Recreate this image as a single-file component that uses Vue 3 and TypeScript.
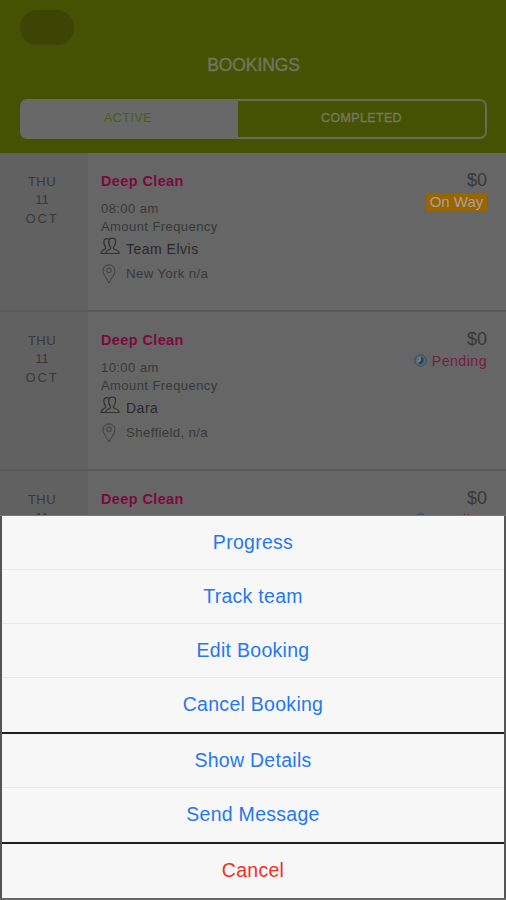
<script setup lang="ts">
interface Booking {
  time: string
  team: string
  place: string
  status: 'On Way' | 'Pending'
}

const bookings: Booking[] = [
  { time: '08:00 am', team: 'Team Elvis', place: 'New York n/a', status: 'On Way' },
  { time: '10:00 am', team: 'Dara', place: 'Sheffield, n/a', status: 'Pending' },
  { time: '12:00 pm', team: 'Dara', place: 'Sheffield, n/a', status: 'Pending' },
]

const groups: string[][] = [
  ['Progress', 'Track team', 'Edit Booking', 'Cancel Booking'],
  ['Show Details', 'Send Message'],
  ['Cancel'],
]
</script>

<template>
  <div class="screen">
    <header class="header">
      <div class="pill"></div>
      <h1 class="title">BOOKINGS</h1>
      <div class="tabs">
        <div class="tab active"><span class="active-label">ACTIVE</span></div>
        <div class="tab"><span class="completed-label">COMPLETED</span></div>
      </div>
    </header>

    <main class="list">
      <article v-for="(b, i) in bookings" :key="i" class="row">
        <div class="date">
          <span class="day">THU</span>
          <span class="num">11</span>
          <span class="month">OCT</span>
        </div>
        <div class="info">
          <h2 class="service">Deep Clean</h2>
          <span class="line">{{ b.time }}</span>
          <span class="line">Amount Frequency</span>
          <div class="meta team">
            <svg class="people" viewBox="0 0 20 18">
              <path d="M5.6 16.5H19C19 14 17.8 13.4 14.4 12.2C13.2 11.6 13.3 10.6 13.8 9.8C15.3 8 15.8 6 15.6 3.8C15.3 .5 9.6 .2 8.9 3.6C8.5 6 8.9 8.5 10.3 10C10.9 11 10.7 11.9 9.8 12.4C7.6 13.2 5.8 13.8 5.6 16.5Z" />
              <path d="M8.8 2.2C6.7 .8 3.8 2 3.8 4.6C3.8 7 4.3 8.7 5.6 10C6 11 5.8 11.6 5 12C2.5 13.2 1.2 13.6 1 16.5H5.6" />
            </svg>
            <span>{{ b.team }}</span>
          </div>
          <div class="meta place">
            <svg class="pin" viewBox="0 0 14 20">
              <path d="M7 19C5.8 15.7 1 11 1 6.6A6 5.8 0 0 1 13 6.6C13 11 8.2 15.7 7 19Z" />
              <circle cx="7" cy="6.4" r="2.4" />
            </svg>
            <span>{{ b.place }}</span>
          </div>
        </div>
        <div class="side">
          <span class="price">$0</span>
          <span v-if="b.status === 'On Way'" class="onway">On Way</span>
          <span v-else class="pending">
            <svg class="clock" viewBox="0 0 13 13">
              <circle class="ring" cx="6.5" cy="6.5" r="5.7" />
              <path class="fill" d="M7 2.4A4.1 4.1 0 0 1 5 10.3L4.5 8L7 6.5Z" />
              <path class="light" d="M6 3V6.2L3.7 8.3" />
            </svg>
            <span class="pending-label">Pending</span>
          </span>
        </div>
      </article>
    </main>

    <div class="sheet">
      <div v-for="(g, i) in groups" :key="i" class="group">
        <div v-for="label in g" :key="label" class="action" :class="{ danger: label === 'Cancel' }">
          <span class="action-label">{{ label }}</span>
        </div>
      </div>
    </div>
  </div>
</template>

<style>
body {
  margin: 0;
  background: #666;
}
</style>

<style scoped>
.screen {
  position: relative;
  width: 506px;
  height: 900px;
  overflow: hidden;
  box-sizing: border-box;
  background: #666;
  font-family: "Liberation Sans", Arial, sans-serif;
  color: #383838;
}
.header {
  height: 153px;
  box-sizing: border-box;
  padding: 10px 19px 0 20px;
  background: #465203;
}
.pill {
  width: 54px;
  height: 35px;
  border-radius: 17px;
  background: #3c4504;
}
.title {
  margin: 10px 0 0;
  height: 20px;
  line-height: 20px;
  font-size: 17.5px;
  font-weight: 400;
  letter-spacing: -0.08px;
  -webkit-text-stroke: 0.35px #737560;
  text-align: center;
  color: #737560;
}
.tabs {
  display: flex;
  margin-top: 24px;
  height: 40px;
  box-sizing: border-box;
  border: 2px solid #686b56;
  border-left-color: #686868;
  border-radius: 7px;
  background: linear-gradient(90deg, #686868 216px, transparent 216px);
}
.tab {
  flex: 1 1 0;
  line-height: 35px;
  font-size: 12.5px;
  text-align: center;
  color: #74775f;
}
.completed-label {
  letter-spacing: 0.35px;
  -webkit-text-stroke: 0.35px #74775f;
}
.tab.active {
  flex: 0 0 216px;
  box-sizing: border-box;
  padding-right: 4px;
  letter-spacing: 0.5px;
  color: #4e5b16;
}
.row {
  display: flex;
  height: 159px;
  box-sizing: border-box;
  border-bottom: 2px solid #595959;
}
.date {
  flex: 0 0 88px;
  box-sizing: border-box;
  padding: 20px 4px 0 0;
  display: flex;
  flex-direction: column;
  align-items: center;
  background: #616161;
  font-size: 13px;
  line-height: 18.3px;
}
.day {
  letter-spacing: 0.5px;
}
.month {
  letter-spacing: 1.9px;
  margin-right: 0;
}
.info {
  flex: 1;
  padding: 19px 0 0 13px;
  font-size: 13px;
}
.service {
  margin: 0 0 10px;
  font-size: 14.5px;
  line-height: 18px;
  font-weight: 700;
  letter-spacing: 0.38px;
  color: #7c0a38;
}
.line {
  display: block;
  line-height: 18.4px;
  letter-spacing: 0.43px;
}
.meta {
  display: flex;
  align-items: center;
}
.team {
  height: 19px;
  margin-top: 3px;
  font-size: 14px;
  letter-spacing: 0.5px;
  color: #292929;
}
.place {
  height: 22px;
  margin-top: 4px;
  font-size: 13.3px;
  letter-spacing: 0.33px;
}
.people {
  width: 20px;
  height: 18px;
  margin: -7px 6px 0 -1px;
  fill: none;
  stroke: #303030;
  stroke-width: 1.2;
}
.pin {
  width: 14px;
  height: 20px;
  margin: 0 10px 0 1px;
  fill: none;
  stroke: #3e3e3e;
  stroke-width: 1;
}
.side {
  flex: 0 0 100px;
  box-sizing: border-box;
  padding: 17px 19px 0 0;
  display: flex;
  flex-direction: column;
  align-items: flex-end;
}
.price {
  font-size: 18px;
  line-height: 20px;
}
.onway {
  margin-top: 3px;
  width: 61px;
  height: 18px;
  line-height: 18px;
  font-size: 15px;
  text-align: center;
  background: #996500;
  color: #a8a29a;
}
.pending {
  display: flex;
  align-items: center;
  gap: 5px;
  margin-top: 3px;
  height: 18px;
  font-size: 14.3px;
  letter-spacing: 0.4px;
  color: #741d3f;
}
.clock {
  width: 13px;
  height: 13px;
  margin-top: -2px;
  fill: none;
}
.ring {
  stroke: #274d6e;
  stroke-width: 1;
}
.fill {
  fill: #104a78;
}
.light {
  stroke: #819097;
  stroke-width: 1.2;
}
.sheet {
  position: absolute;
  left: 0;
  right: 0;
  bottom: 0;
  padding: 0 2px;
  display: flex;
  flex-direction: column;
  gap: 2px;
  background: linear-gradient(90deg, #555 2px, #202020 2px, #202020 504px, #555 504px);
  border-top: 1px solid #777;
  border-bottom: 2px solid #666;
}
.group {
  background: #f7f7f7;
}
.action {
  height: 54px;
  box-sizing: border-box;
  border-bottom: 1px solid #e9e9e9;
  line-height: 53px;
  font-size: 19.5px;
  letter-spacing: 0.28px;
  text-align: center;
  color: #2878ed;
}
.action:last-child {
  border-bottom: 0;
}
.action.danger {
  color: #ee3026;
}
</style>
